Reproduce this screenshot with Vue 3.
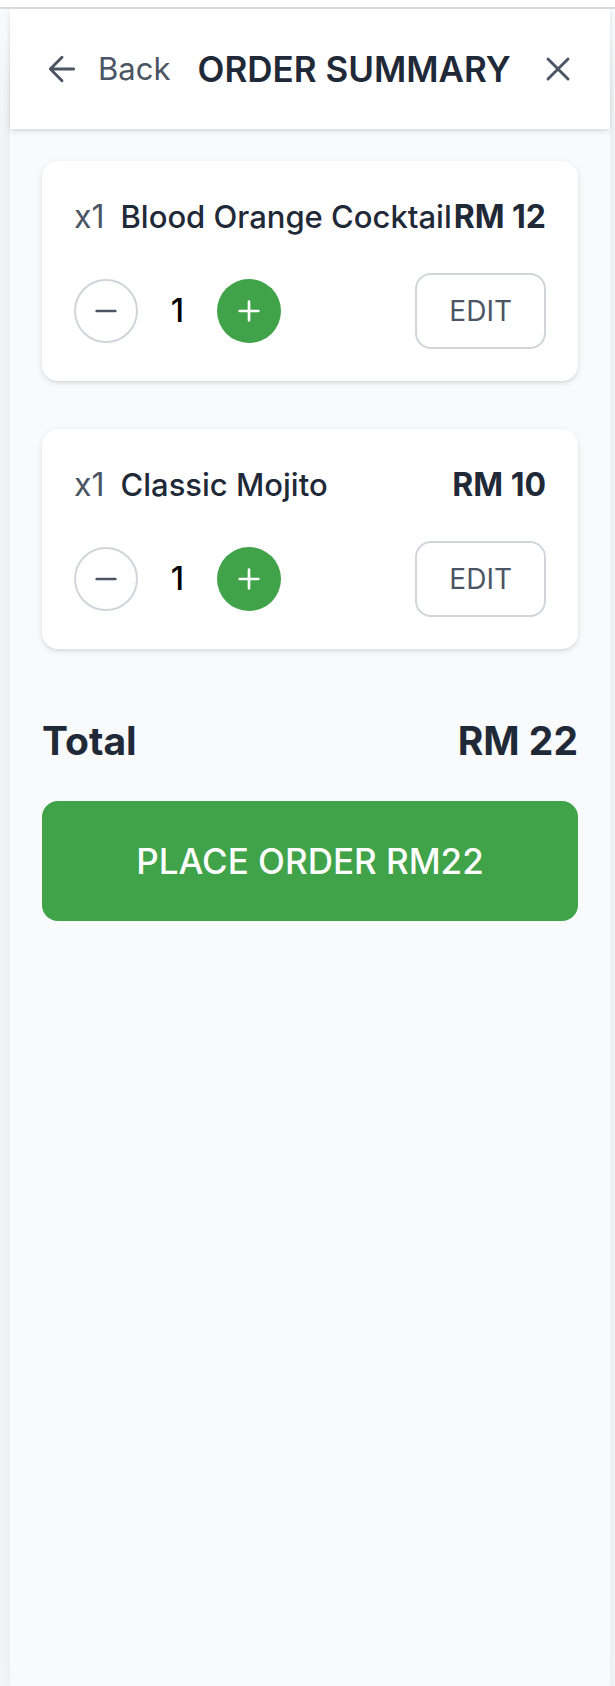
<script setup>
import { computed, ref } from 'vue'

const items = ref([
  { id: 1, name: 'Blood Orange Cocktail', price: 12, quantity: 1 },
  { id: 2, name: 'Classic Mojito', price: 10, quantity: 1 },
])

const total = computed(() =>
  items.value.reduce((sum, item) => sum + item.price * item.quantity, 0)
)

function decrease(item) {
  if (item.quantity > 1) item.quantity--
}
</script>

<template>
  <div class="page">
    <div class="panel">
      <header class="header">
        <button class="back" type="button">
          <svg class="icon-large" viewBox="0 0 24 24" aria-hidden="true">
            <path d="M12 19l-7-7 7-7M19 12H5" />
          </svg>
          <span>Back</span>
        </button>
        <h1 class="title">ORDER SUMMARY</h1>
        <button class="close" type="button" aria-label="Close">
          <svg class="icon-large" viewBox="0 0 24 24" aria-hidden="true">
            <path d="M18 6L6 18M6 6l12 12" />
          </svg>
        </button>
      </header>

      <main class="content">
        <ul class="items">
          <li v-for="item in items" :key="item.id" class="card">
            <div class="row">
              <div class="label">
                <span class="count">x{{ item.quantity }}</span>
                <span class="name">{{ item.name }}</span>
              </div>
              <span class="price">RM {{ item.price * item.quantity }}</span>
            </div>
            <div class="row">
              <div class="stepper">
                <button class="round minus" type="button" aria-label="Decrease quantity" @click="decrease(item)">
                  <svg class="icon" viewBox="0 0 24 24" aria-hidden="true">
                    <path d="M5 12h14" />
                  </svg>
                </button>
                <span class="quantity">{{ item.quantity }}</span>
                <button class="round plus" type="button" aria-label="Increase quantity" @click="item.quantity++">
                  <svg class="icon" viewBox="0 0 24 24" aria-hidden="true">
                    <path d="M5 12h14M12 5v14" />
                  </svg>
                </button>
              </div>
              <button class="edit" type="button">EDIT</button>
            </div>
          </li>
        </ul>

        <div class="total">
          <span>Total</span>
          <span>RM {{ total }}</span>
        </div>
        <button class="order" type="button">PLACE ORDER RM{{ total }}</button>
      </main>
    </div>
  </div>
</template>

<style>
body {
  margin: 0;
  background: #f9fafb;
}
</style>

<style scoped>
.page {
  box-sizing: border-box;
  display: flex;
  flex-direction: column;
  min-height: 100vh;
  overflow: hidden;
  border-top: 7px solid #fff;
  padding: 0 5px 0 10px;
  background: #f9fafb;
  color: #1f2937;
  font-family: Inter, "Liberation Sans", sans-serif;
}

.page::before {
  content: "";
  height: 2px;
  margin: 0 -5px 0 -10px;
  background: #d9dadc;
  position: relative;
  z-index: 1;
}

.panel {
  flex: 1;
  background: #f9fafb;
  box-shadow: 0 40px 50px -10px rgba(0, 0, 0, 0.1), 0 16px 20px -12px rgba(0, 0, 0, 0.1);
}

button {
  margin: 0;
  border: 0;
  padding: 0;
  background: none;
  color: #4b5563;
  font: inherit;
  cursor: pointer;
}

svg {
  display: block;
  flex: none;
  fill: none;
  stroke: currentColor;
  stroke-width: 2;
  stroke-linecap: round;
  stroke-linejoin: round;
}

.icon-large {
  width: 40px;
  height: 40px;
  stroke-width: 1.75;
}

.icon {
  width: 32px;
  height: 32px;
}

.header {
  display: flex;
  align-items: center;
  justify-content: space-between;
  min-height: 120px;
  padding: 0 32px;
  background: #fff;
  box-shadow: 0 2px 6px rgba(0, 0, 0, 0.1), 0 2px 4px -2px rgba(0, 0, 0, 0.1);
}

.back {
  display: flex;
  align-items: center;
  gap: 16px;
  font-size: 31px;
  line-height: 48px;
}

.title {
  margin: 0;
  font-size: 35px;
  line-height: 56px;
  font-weight: 600;
  white-space: nowrap;
}

.content {
  padding: 32px;
}

.items {
  display: grid;
  gap: 48px;
  margin: 0;
  padding: 0;
  list-style: none;
}

.card {
  display: grid;
  gap: 32px;
  padding: 32px;
  border-radius: 16px;
  background: #fff;
  box-shadow: 0 2px 6px rgba(0, 0, 0, 0.1), 0 2px 4px -2px rgba(0, 0, 0, 0.1);
}

.row {
  display: flex;
  align-items: center;
  justify-content: space-between;
  font-size: 32px;
  line-height: 48px;
  white-space: nowrap;
}

.label {
  display: flex;
  align-items: baseline;
  gap: 16px;
}

.count {
  color: #4b5563;
}

.name {
  font-size: 31px;
  font-weight: 500;
}

.price {
  font-weight: 700;
}

.stepper {
  display: flex;
  align-items: center;
  gap: 32px;
}

.round {
  box-sizing: border-box;
  display: grid;
  place-items: center;
  width: 64px;
  height: 64px;
  border-radius: 50%;
}

.minus {
  border: 2px solid #d1d5db;
}

.plus {
  background: #40a34a;
  color: #fff;
}

.quantity {
  min-width: 15px;
  color: #000;
  font-weight: 500;
  text-align: center;
}

.edit {
  border: 2px solid #d1d5db;
  border-radius: 16px;
  padding: 16px 32px;
  font-size: 28px;
  line-height: 40px;
}

.total {
  display: flex;
  justify-content: space-between;
  padding: 64px 0 32px;
  font-size: 39px;
  line-height: 56px;
  font-weight: 700;
}

.order {
  width: 100%;
  border-radius: 16px;
  padding: 32px;
  background: #40a34a;
  color: #fff;
  font-size: 35px;
  line-height: 56px;
  font-weight: 500;
}
</style>
